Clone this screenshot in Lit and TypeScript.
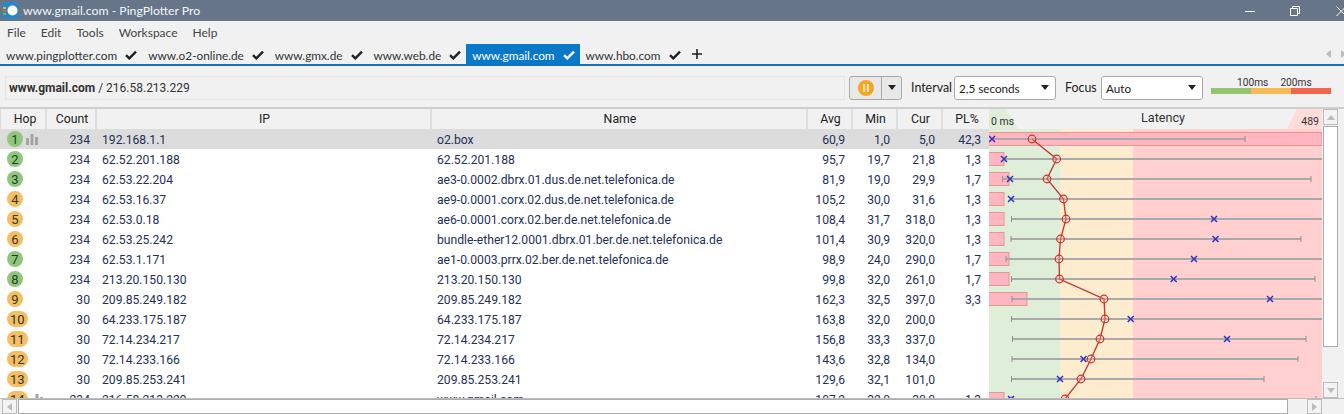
import { LitElement, html, css, svg } from "lit";
import { customElement } from "lit/decorators.js";

type Hop = {
  n: number; count: string; ip: string; name: string; avg: string; min: string; cur: string; pl: string;
  green: boolean; bar: number; lo: number; hi: number; tickHi: boolean; x: number; c: number;
};
const R = (n: number, count: string, ip: string, name: string, avg: string, min: string, cur: string, pl: string, green: boolean, bar: number, lo: number, hi: number, tickHi: boolean, x: number, c: number): Hop =>
  ({ n, count, ip, name, avg, min, cur, pl, green, bar, lo, hi, tickHi, x, c });

const hops: Hop[] = [
  R(1, "234", "192.168.1.1", "o2.box", "60,9", "1,0", "5,0", "42,3", true, 1322, 992, 1245, true, 992, 1032),
  R(2, "234", "62.52.201.188", "62.52.201.188", "95,7", "19,7", "21,8", "1,3", true, 1004, 1004, 1322, false, 1004, 1056.7),
  R(3, "234", "62.53.22.204", "ae3-0.0002.dbrx.01.dus.de.net.telefonica.de", "81,9", "19,0", "29,9", "1,7", true, 1009, 1002.7, 1311, true, 1010, 1047),
  R(4, "234", "62.53.16.37", "ae9-0.0001.corx.02.dus.de.net.telefonica.de", "105,2", "30,0", "31,6", "1,3", false, 1004, 1011, 1322, false, 1011, 1063.5),
  R(5, "234", "62.53.0.18", "ae6-0.0001.corx.02.ber.de.net.telefonica.de", "108,4", "31,7", "318,0", "1,3", false, 1004, 1011.5, 1322, false, 1214, 1066),
  R(6, "234", "62.53.25.242", "bundle-ether12.0001.dbrx.01.ber.de.net.telefonica.de", "101,4", "30,9", "320,0", "1,3", false, 1004, 1011, 1301, true, 1215.5, 1060.5),
  R(7, "234", "62.53.1.171", "ae1-0.0003.prrx.02.ber.de.net.telefonica.de", "98,9", "24,0", "290,0", "1,7", true, 1009, 1006, 1322, false, 1194, 1059),
  R(8, "234", "213.20.150.130", "213.20.150.130", "99,8", "32,0", "261,0", "1,7", true, 1009, 1011.5, 1315, true, 1173.7, 1059.5),
  R(9, "30", "209.85.249.182", "209.85.249.182", "162,3", "32,5", "397,0", "3,3", false, 1027, 1012, 1322, false, 1270, 1104),
  R(10, "30", "64.233.175.187", "64.233.175.187", "163,8", "32,0", "200,0", "", false, 0, 1011.5, 1322, false, 1130.7, 1105),
  R(11, "30", "72.14.234.217", "72.14.234.217", "156,8", "33,3", "337,0", "", false, 0, 1012.5, 1306, true, 1227, 1100),
  R(12, "30", "72.14.233.166", "72.14.233.166", "143,6", "32,8", "134,0", "", false, 0, 1012, 1298, true, 1083.5, 1091),
  R(13, "30", "209.85.253.241", "209.85.253.241", "129,6", "32,1", "101,0", "", false, 0, 1011.5, 1264, true, 1060, 1081),
  R(14, "234", "216.58.213.229", "www.gmail.com", "107,2", "32,0", "30,0", "1,3", false, 1004, 1011, 1316, true, 1011, 1065),
];

const tabs = [
  { label: "www.pingplotter.com" },
  { label: "www.o2-online.de" },
  { label: "www.gmx.de" },
  { label: "www.web.de" },
  { label: "www.gmail.com", active: true },
  { label: "www.hbo.com" },
];

const check = html`<svg class="check" viewBox="0 0 12 10" width="12" height="10"><path d="M1 5.2 4.3 8.4 11 1.6" fill="none" stroke="currentColor" stroke-width="2.4"/></svg>`;
const bars = html`<svg class="bars" viewBox="0 0 12 12" width="12" height="12"><path d="M0 5h3v7H0zM4.5 1h3v11h-3zM9 4h3v8H9z" fill="#a4a4a4"/></svg>`;
const caret = html`<svg viewBox="0 0 8 5" width="8" height="5"><path d="M0 0h8L4 5z" fill="#222"/></svg>`;

@customElement("app-root")
export class AppRoot extends LitElement {
  static styles = css`
    :host { display: block; width: 1344px; height: 414px; overflow: hidden; background: #f1f1f1; font-family: Lato, "Open Sans", sans-serif; color: #222; }
    .title { height: 21px; background: #667588; display: flex; align-items: center; color: #f4f6f8; font-size: 12.25px; }
    .logo { margin: 0 4px 0 2px; flex: none; }
    .title-text { flex: 1; }
    .win { display: flex; align-items: center; }
    .win svg { display: block; }
    .win .w2 { margin-left: 35px; }
    .win .w3 { margin-left: 36px; }
    .menu { height: 23px; display: flex; align-items: center; padding-left: 7px; gap: 15px; font-size: 12px; color: #444; }
    .tabs { height: 20px; display: flex; align-items: stretch; border-bottom: 2px solid #1874b6; font-size: 11.8px; }
    .tab { display: flex; align-items: center; padding: 2px 5px 0 6px; gap: 8px; color: #333; }
    .tab .check { color: #222; }
    .tab.active { background: #0a78c8; color: #fff; }
    .tab.active .check { color: #fff; }
    .add { margin: 0 0 0 6px; align-self: center; display: block; }
    .spacer { flex: 1; }
    .tab-arrows { display: flex; align-items: center; gap: 10px; margin-right: -2px; }
    .toolbar { height: 41px; display: flex; align-items: center; padding: 0 13px 0 5px; box-sizing: border-box; font-size: 12.4px; }
    .address { flex: 1; height: 24px; margin-top: 2px; border: 1px solid #e6e6e6; box-sizing: border-box; display: flex; align-items: center; padding-left: 3px; color: #333; font-family: Roboto, sans-serif; font-size: 12px; }
    .address b { font-weight: 700; margin-right: 3px; }
    .address span { margin-left: 3px; }
    .btn { height: 24px; margin: 2px 0 0 4px; width: 53px; border: 1px solid #aaa; border-radius: 3px; box-sizing: border-box; background: #e8e8e8; display: grid; grid-template-columns: 31px 1fr; }
    .btn > div { display: flex; align-items: center; justify-content: center; }
    .btn > div + div { border-left: 1px solid #aaa; }
    .lbl { margin: 2px 0 0 9px; width: 43px; }
    .lbl.f { margin-left: 9px; width: 36px; }
    .sel { height: 24px; margin-top: 2px; width: 102px; box-sizing: border-box; border: 1px solid #aaa; border-radius: 3px; background: #fff; display: flex; align-items: center; justify-content: space-between; padding: 0 6px 0 4px; font-size: 11.7px; }
    .legend { margin: 0 0 0 8px; width: 120px; align-self: flex-start; padding-top: 11px; display: flex; flex-direction: column; font: 10.2px Roboto, sans-serif; color: #333; }
    .legend-labels { display: flex; padding-left: 26px; gap: 12px; height: 11px; line-height: 11px; }
    .legend-bar { display: grid; grid-template-columns: 1fr 1fr 1fr; height: 6px; }
    .legend-bar i:nth-child(1) { background: #93c46e; }
    .legend-bar i:nth-child(2) { background: #f6bb55; }
    .legend-bar i:nth-child(3) { background: #f2654f; }
    .main { height: 289px; display: flex; border-top: 2px solid #cfcfcf; background: #fff; overflow: hidden; }
    .table { width: 989px; flex: none; font-family: Roboto, sans-serif; font-size: 12.15px; }
    .row { display: grid; grid-template-columns: 44px 50px 335px 376px 45px 45px 45px 46px; padding-left: 3px; height: 20px; align-items: center; color: #243058; background: #fff; }
    .row > div:not(.hopc) { padding-top: 2px; }
    .row.sel-row { background: #dcdcdc; margin-left: -2px; padding-left: 5px; }
    .row.head { background: #f1f1f1; color: #222; align-items: stretch; border-left: 1px solid #dcdcdc; padding-left: 2px; font-size: 12.3px; }
    .row.head > div { display: flex; align-items: center; justify-content: center; border-right: 2px solid #dedede; padding: 0 0 0 2px; }
    .row.head > div:last-child { border-right: none; }
    .num { text-align: right; padding-right: 8px; }
    .cnt { text-align: right; padding-right: 7px; }
    .txt { padding-left: 5px; white-space: nowrap; }
    .hopc { display: flex; align-items: center; padding-left: 4px; gap: 3px; }
    .pill { min-width: 16px; height: 16px; border-radius: 8px; padding: 0 2px; box-sizing: border-box; text-align: center; line-height: 17px; color: #2c3a2c; font-size: 13px; }
    .pill.g { background: #8ec77c; }
    .pill.o { background: #f6bd62; }
    .pill.w { padding: 0 3px; }
    .chart { display: block; flex: none; background: #fff; }
    .chart text { font-family: Roboto, sans-serif; fill: #333; }
    .vs { flex: 1; display: flex; flex-direction: column; background: #f1f1f1; padding: 0 6px 0 1px; gap: 1px; }
    .sb { box-sizing: border-box; border: 1px solid #ababab; background: #fff; display: flex; align-items: center; justify-content: center; flex: none; }
    .sb.btn-s { height: 16px; background: #f3f3f3; border-color: #bbb; }
    .vs .thumb { height: 221px; }
    .vs .fill { flex: 1; }
    .hs { height: 16px; border-top: 1px solid #bdbdbd; box-sizing: border-box; display: flex; background: #f1f1f1; padding-left: 2px; align-items: stretch; }
    .hs .b { width: 15px; border: 1px solid #bbb; box-sizing: border-box; background: #f3f3f3; display: flex; align-items: center; justify-content: center; flex: none; }
    .hs .t { width: 1270px; margin-left: 1px; border: 1px solid #ababab; box-sizing: border-box; background: #fff; flex: none; }
    .hs .r { margin-left: 19px; }
  `;

  private chart() {
    const X0 = 989, W = 333, H = 289;
    const y = (i: number) => 30 + i * 20;
    const px = (v: number) => v - X0;
    const pts = hops.map((h, i) => `${px(h.c)},${y(i)}`).join(" ");
    return html`<svg class="chart" width=${W} height=${H} viewBox="0 0 ${W} ${H}">
      ${svg`
        <rect x="0" y="0" width=${W} height=${H} fill="#ffd0cf"/>
        <rect x="0" y="20" width="71" height=${H} fill="#dfeed8"/>
        <rect x="71" y="20" width="73" height=${H} fill="#fdeccd"/>
        <rect x="0" y="0" width=${W} height="20" fill="#f1f1f1"/>
        <polygon points="0,0 17,0 29,20 0,20" fill="#dfeed8"/>
        <polygon points="${W},0 308,0 298,20 ${W},20" fill="#ffdcda"/>
        <text x="2" y="15.5" font-size="10.5">0 ms</text>
        <text x="174" y="13" font-size="12.6" text-anchor="middle">Latency</text>
        <text x="330" y="16" font-size="10.5" text-anchor="end">489</text>
        ${hops.map((h, i) => h.bar ? svg`<rect x="-1" y=${y(i) - 6.5} width=${px(h.bar) + 1} height="13" fill="#ffb6c1" stroke="#e8968f" stroke-width="1"/>` : null)}
        ${hops.map((h, i) => svg`
          <line x1=${px(h.lo)} y1=${y(i)} x2=${px(h.hi)} y2=${y(i)} stroke="#a9a9a9" stroke-width="2"/>
          ${i > 0 && i !== 1 && i !== 3 ? svg`<line x1=${px(h.lo)} y1=${y(i) - 3} x2=${px(h.lo)} y2=${y(i) + 3} stroke="#8f8f8f"/>` : null}
          ${h.tickHi ? svg`<line x1=${px(h.hi)} y1=${y(i) - 3} x2=${px(h.hi)} y2=${y(i) + 3} stroke="#8f8f8f"/>` : null}
        `)}
        <polyline points=${pts} fill="none" stroke="#c8322c" stroke-width="1.3"/>
        ${hops.map((h, i) => svg`
          <circle cx=${px(h.c)} cy=${y(i)} r="3.8" fill="#f7c3b8" fill-opacity="0.25" stroke="#c8322c" stroke-width="1.2"/>
          <path d="M${px(h.x) - 3} ${y(i) - 3}l6 6m0-6l-6 6" stroke="#2f2fc4" stroke-width="1.5" fill="none"/>
        `)}
      `}
    </svg>`;
  }

  render() {
    return html`
      <div class="title">
        <svg class="logo" width="17" height="17" viewBox="0 0 17 17">
          <rect x="0" y="0" width="17" height="17" rx="4" fill="#2a86c4"/>
          <circle cx="10.5" cy="8.5" r="5" fill="#fff"/>
          <path d="M1 5h3v2H1z" fill="#f1b52e"/><path d="M1 8h3v2H1z" fill="#e3622e"/><path d="M1 11h3v2H1z" fill="#6dbb4a"/>
        </svg>
        <div class="title-text">www.gmail.com - PingPlotter Pro</div>
        <div class="win">
          <svg width="10" height="10" viewBox="0 0 10 10"><path d="M0 5.5h10" stroke="#fff"/></svg>
          <svg class="w2" width="10" height="10" viewBox="0 0 10 10"><path d="M.5 2.5h7v7h-7zM2.5 2.5v-2h7v7h-2" fill="none" stroke="#fff"/></svg>
          <svg class="w3" width="8" height="10" viewBox="0 0 8 10"><path d="M.5.5 10 10M.5 10 10 .5" stroke="#fff"/></svg>
        </div>
      </div>
      <div class="menu"><span>File</span><span>Edit</span><span>Tools</span><span>Workspace</span><span>Help</span></div>
      <div class="tabs">
        ${tabs.map(t => html`<div class="tab ${t.active ? "active" : ""}"><span>${t.label}</span>${check}</div>`)}
        <svg class="add" width="10" height="10" viewBox="0 0 10 10"><path d="M5 0v10M0 5h10" stroke="#222" stroke-width="1.6"/></svg>
        <div class="spacer"></div>
        <div class="tab-arrows">
          <svg width="5" height="8" viewBox="0 0 5 8"><path d="M5 0v8L0 4z" fill="#bbb"/></svg>
          <svg width="5" height="8" viewBox="0 0 5 8"><path d="M0 0v8l5-4z" fill="#bbb"/></svg>
        </div>
      </div>
      <div class="toolbar">
        <div class="address"><b>www.gmail.com</b>/<span>216.58.213.229</span></div>
        <div class="btn">
          <div><svg width="16" height="16" viewBox="0 0 16 16"><circle cx="8" cy="8" r="8" fill="#f5a623"/><path d="M5 4h2.2v8H5zM8.8 4H11v8H8.8z" fill="#fde2ae"/></svg></div>
          <div>${caret}</div>
        </div>
        <div class="lbl">Interval</div>
        <div class="sel"><span>2,5 seconds</span>${caret}</div>
        <div class="lbl f">Focus</div>
        <div class="sel"><span>Auto</span>${caret}</div>
        <div class="legend">
          <div class="legend-labels"><span>100ms</span><span>200ms</span></div>
          <div class="legend-bar"><i></i><i></i><i></i></div>
        </div>
      </div>
      <div class="main">
        <div class="table">
          <div class="row head"><div>Hop</div><div>Count</div><div>IP</div><div>Name</div><div>Avg</div><div>Min</div><div>Cur</div><div>PL%</div></div>
          ${hops.map((h, i) => html`
            <div class="row ${i === 0 ? "sel-row" : ""}">
              <div class="hopc"><span class="pill ${h.green ? "g" : "o"} ${h.n > 9 ? "w" : ""}">${h.n}</span>${i === 0 || i === 13 ? bars : null}</div>
              <div class="cnt">${h.count}</div>
              <div class="txt">${h.ip}</div>
              <div class="txt">${h.name}</div>
              <div class="num">${h.avg}</div>
              <div class="num">${h.min}</div>
              <div class="num">${h.cur}</div>
              <div class="num">${h.pl}</div>
            </div>`)}
        </div>
        ${this.chart()}
        <div class="vs">
          <div class="sb btn-s"><svg width="8" height="5" viewBox="0 0 8 5"><path d="M4 0l4 5H0z" fill="#bbb"/></svg></div>
          <div class="sb thumb"></div>
          <div class="fill"></div>
          <div class="sb btn-s"><svg width="8" height="5" viewBox="0 0 8 5"><path d="M0 0h8L4 5z" fill="#bbb"/></svg></div>
        </div>
      </div>
      <div class="hs">
        <div class="b"><svg width="5" height="8" viewBox="0 0 5 8"><path d="M5 0v8L0 4z" fill="#bbb"/></svg></div>
        <div class="t"></div>
        <div class="b r"><svg width="5" height="8" viewBox="0 0 5 8"><path d="M0 0v8l5-4z" fill="#bbb"/></svg></div>
      </div>
    `;
  }
}
